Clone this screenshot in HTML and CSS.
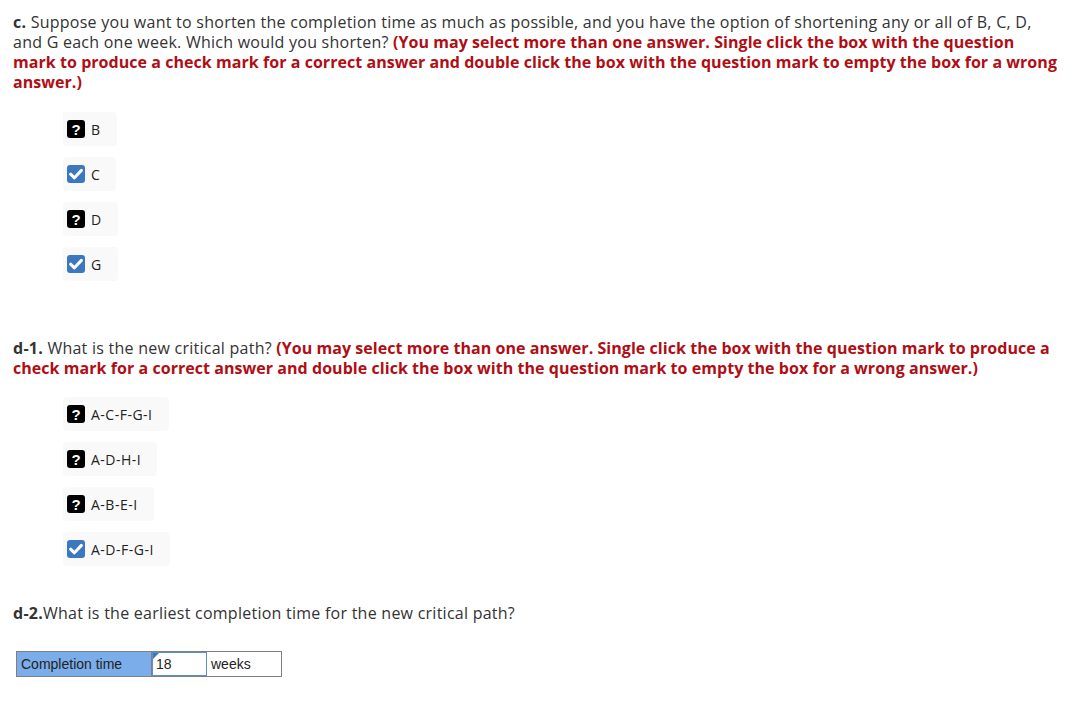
FILE: index.html
```html
<!DOCTYPE html>
<html>
<head>
<meta charset="utf-8">
<link rel="stylesheet" href="styles.css">
</head>
<body>
<div class="page">
  <section class="q q-c">
    <p class="prompt"><b>c.</b> Suppose you want to shorten the completion time as much as possible, and you have the option of shortening any or all of B, C, D, and G each one week. Which would you shorten? <span class="note">(You may select more than one answer. Single click the box with the question mark to produce a check mark for a correct answer and double click the box with the question mark to empty the box for a wrong answer.)</span></p>
    <ul class="options">
      <li class="opt"><span class="ico qm">?</span><span class="lbl">B</span></li>
      <li class="opt"><span class="ico ck"><svg viewBox="0 0 18 18" width="18" height="18"><path d="M3.6 9.2 L7.4 12.8 L14.4 5.4" fill="none" stroke="#fff" stroke-width="3" stroke-linecap="round" stroke-linejoin="round"/></svg></span><span class="lbl">C</span></li>
      <li class="opt"><span class="ico qm">?</span><span class="lbl">D</span></li>
      <li class="opt"><span class="ico ck"><svg viewBox="0 0 18 18" width="18" height="18"><path d="M3.6 9.2 L7.4 12.8 L14.4 5.4" fill="none" stroke="#fff" stroke-width="3" stroke-linecap="round" stroke-linejoin="round"/></svg></span><span class="lbl">G</span></li>
    </ul>
  </section>

  <section class="q q-d1">
    <p class="prompt"><b>d-1.</b> What is the new critical path? <span class="note">(You may select more than one answer. Single click the box with the question mark to produce a check mark for a correct answer and double click the box with the question mark to empty the box for a wrong answer.)</span></p>
    <ul class="options">
      <li class="opt"><span class="ico qm">?</span><span class="lbl">A-C-F-G-I</span></li>
      <li class="opt"><span class="ico qm">?</span><span class="lbl">A-D-H-I</span></li>
      <li class="opt"><span class="ico qm">?</span><span class="lbl">A-B-E-I</span></li>
      <li class="opt"><span class="ico ck"><svg viewBox="0 0 18 18" width="18" height="18"><path d="M3.6 9.2 L7.4 12.8 L14.4 5.4" fill="none" stroke="#fff" stroke-width="3" stroke-linecap="round" stroke-linejoin="round"/></svg></span><span class="lbl">A-D-F-G-I</span></li>
    </ul>
  </section>

  <section class="q q-d2">
    <p class="prompt"><b>d-2.</b>What is the earliest completion time for the new critical path?</p>
    <div class="answer-row">
      <div class="cell label-cell">Completion time</div>
      <div class="cell input-cell"><span class="corner"></span>18</div>
      <div class="cell unit-cell">weeks</div>
    </div>
  </section>
</div>
</body>
</html>
```
FILE: styles.css
```css
html, body {
  margin: 0;
  padding: 0;
  background: #fff;
}
.page {
  padding: 12px 13px 0 13px;
  font-family: "Open Sans", "Lato", sans-serif;
  color: #333;
}
.prompt {
  margin: 0;
  font-size: 16px;
  line-height: 20px;
  letter-spacing: 0.25px;
  width: 1045px;
}
.prompt b {
  font-weight: 700;
}
.note {
  color: #b00e15;
  font-weight: 700;
  letter-spacing: 0.05px;
}
.options {
  list-style: none;
  margin: 20px 0 0 0;
  padding: 0 0 0 50px;
  display: flex;
  flex-direction: column;
  align-items: flex-start;
  gap: 11px;
}
.opt {
  display: flex;
  align-items: center;
  height: 34px;
  padding: 0 16px 0 4px;
  background: #f9f9f9;
  border-radius: 4px;
  box-sizing: border-box;
}
.ico {
  width: 18px;
  height: 18px;
  border-radius: 3px;
  display: flex;
  align-items: center;
  justify-content: center;
  margin-right: 6px;
}
.qm {
  background: #000;
  color: #fff;
  font-family: "Liberation Sans", Arial, sans-serif;
  font-weight: 700;
  font-size: 15px;
}
.ck {
  background: #3b78c0;
}
.lbl {
  font-size: 14px;
  letter-spacing: 0.5px;
  color: #222;
}
.q-d1 {
  margin-top: 57px;
}
.q-d1 .options {
  margin-top: 19px;
}
.q-d2 {
  margin-top: 37px;
}
.answer-row {
  display: flex;
  margin: 28px 0 0 3px;
  font-family: "Liberation Sans", Arial, sans-serif;
  font-size: 14px;
  color: #222;
  border: 1px solid #808080;
  width: fit-content;
}
.cell {
  height: 24px;
  line-height: 24px;
  box-sizing: border-box;
}
.label-cell {
  width: 135px;
  background: #7badea;
  padding-left: 4px;
  border-right: 1px solid #808080;
}
.input-cell {
  position: relative;
  width: 55px;
  border: 1px solid #5b8fd0;
  padding-left: 3px;
  line-height: 22px;
}
.corner {
  position: absolute;
  left: 0;
  top: 0;
  width: 0;
  height: 0;
  border-top: 6px solid #3b78c0;
  border-right: 6px solid transparent;
}
.unit-cell {
  width: 74px;
  padding-left: 4px;
}
```
